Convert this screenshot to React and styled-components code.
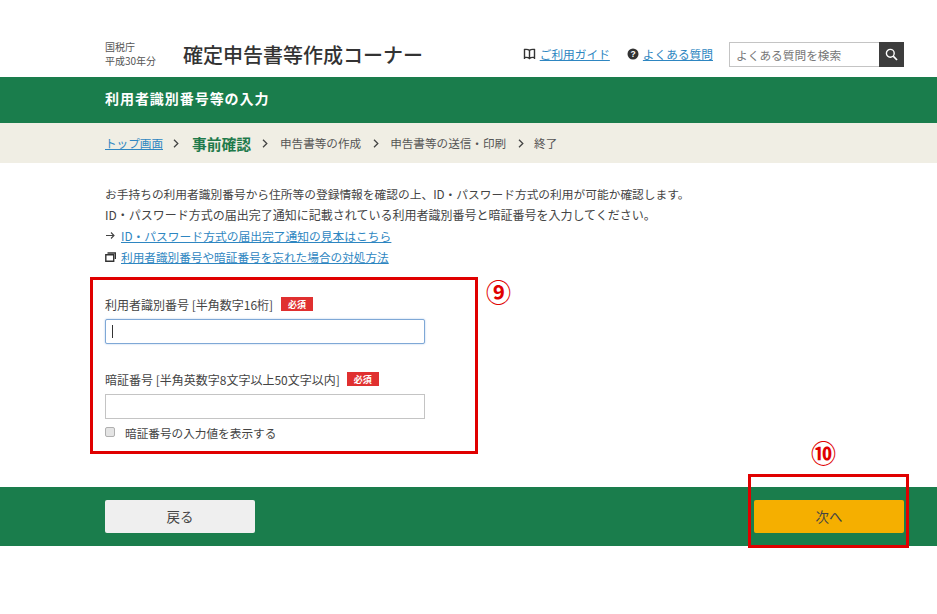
import React from 'react';
import styled, { createGlobalStyle } from 'styled-components';

const Global = createGlobalStyle`
  html, body { margin: 0; padding: 0; background: #fff; }
  body { font-family: "Noto Sans CJK JP", "Liberation Sans", sans-serif; color: #444; font-size: 12px; }
  * { box-sizing: border-box; }
`;
const Page = styled.div`width: 937px; height: 614px; position: relative; overflow: hidden; background: #fff;`;
const Header = styled.header`height: 77px; padding: 40px 33px 0 105px; display: flex; align-items: flex-start;`;
const Agency = styled.div`width: 78px; font-size: 10px; line-height: 13.5px; color: #555;`;
const SiteTitle = styled.h1`margin: 0; font-size: 20px; line-height: 30px; font-weight: 500; color: #333; white-space: nowrap;`;
const HeaderTools = styled.div`margin-left: auto; display: flex; align-items: center; height: 28px;`;
const ToolLink = styled.div`display: flex; align-items: center; gap: 4px; margin-right: ${p => p.$gap}px;`;
const Link = styled.a`color: #2e86c1; text-decoration: underline; font-size: ${p => p.$size || 12}px; line-height: 16px; white-space: nowrap;`;
const Search = styled.div`display: flex; width: 175px; height: 25px;`;
const SearchInput = styled.div`flex: 1; border: 1px solid #c4c4c4; border-right: 0; padding-left: 6px; font-size: 11.7px; line-height: 23px; color: #777; white-space: nowrap;`;
const SearchButton = styled.div`width: 25px; background: #3d3d3d; display: flex; align-items: center; justify-content: center;`;
const TitleBar = styled.div`height: 46px; background: #1a7d4c; color: #fff; padding-left: 105px; display: flex; align-items: center;`;
const PageTitle = styled.h2`margin: 0; font-size: 14px; font-weight: 700; letter-spacing: 0.95px; margin-top: -4px;`;
const Steps = styled.nav`height: 40px; background: #f0eee4; padding-left: 105px; display: flex; align-items: center; color: #555; white-space: nowrap;`;
const Step = styled.span`font-size: 11.6px;`;
const CurrentStep = styled.strong`font-size: 14.75px; color: #1f7a4b; font-weight: 700;`;
const Chevron = styled.svg`width: 6px; height: 9px; margin: 0 ${p => p.$r}px 0 ${p => p.$l}px; flex: none;`;
const Main = styled.main`height: 324px; padding: 21px 0 0 105px;`;
const Line = styled.p`margin: 0; font-size: ${p => p.$size || 12}px; line-height: 20.75px; height: 20.75px; color: #444; white-space: nowrap;`;
const IconLine = styled(Line)`display: flex; align-items: center; gap: 5px;`;
const FormBox = styled.section`position: relative; margin: 10px 0 0 -15px; width: 388px; height: 177px; border: 3px solid #e00000; padding: 16px 0 0 12px;`;
const FieldLabel = styled.div`display: flex; align-items: center; height: 16px; font-size: 12px; color: #444; white-space: nowrap;`;
const Required = styled.span`display: inline-flex; align-items: center; justify-content: center; width: 32px; height: 14px; background: #e03030; color: #fff; font-size: 9px; margin-left: ${p => p.$ml || 8}px; font-weight: 700;`;
const Field = styled.div`height: 25px; width: 320px; margin-top: ${p => p.$mt}px; margin-bottom: ${p => p.$mb || 0}px; background: #fff; border: 1px solid ${p => (p.$focus ? '#7fa8d6' : '#c4c4c4')}; border-radius: ${p => (p.$focus ? 2 : 0)}px; box-shadow: ${p => (p.$focus ? '0 0 2px #a8c6e8' : 'none')}; padding-left: 6px; display: flex; align-items: center;`;
const Caret = styled.span`width: 1px; height: 13px; background: #333;`;
const CheckRow = styled.label`display: flex; align-items: center; margin-top: 5px; height: 16px; font-size: 11.65px; color: #444;`;
const Check = styled.span`width: 10px; height: 10px; background: #e4e4e4; border: 1px solid #b0b0b0; border-radius: 2px; margin-right: 10px;`;
const Annotation = styled.span`position: absolute; color: #e00000; font-size: 25px; line-height: 1; font-weight: 700;`;
const FormMark = styled(Annotation)`left: 393px; top: -1px;`;
const Footer = styled.footer`height: 59px; background: #1a7d4c; padding: 0 33px 0 105px; display: flex; align-items: center; justify-content: space-between;`;
const Button = styled.button`width: 150px; height: 33px; border: 0; border-radius: 2px; font-family: inherit; font-size: 13.5px; line-height: 31px; color: #444; background: ${p => p.$primary ? '#f5af00' : '#efefef'}; padding: 0; margin-top: -1px;`;
const NextHighlight = styled.div`position: absolute; left: 748px; top: 474px; width: 161px; height: 74px; border: 3px solid #e00000;`;
const NextMark = styled(Annotation)`left: 811px; top: 440px;`;

const Chev = (p) => (
  <Chevron {...p} viewBox="0 0 6 9"><path d="M1 .8 4.8 4.5 1 8.2" fill="none" stroke="#444" strokeWidth="1.3" /></Chevron>
);

export default function App() {
  return (
    <Page>
      <Global />
      <Header>
        <Agency>国税庁<br />平成30年分</Agency>
        <SiteTitle>確定申告書等作成コーナー</SiteTitle>
        <HeaderTools>
          <ToolLink $gap={17}>
            <svg width="13" height="12" viewBox="0 0 13 12"><path d="M6.5 2.5C5.5 1.5 3.5 1.2 1.5 1.5V9.5C3.5 9.2 5.5 9.5 6.5 10.5 7.5 9.5 9.5 9.2 11.5 9.5V1.5C9.5 1.2 7.5 1.5 6.5 2.5ZM6.5 2.5V10.5M1.5 3V11M11.5 3V11" fill="none" stroke="#333" strokeWidth="1.4" /></svg>
            <Link href="#" $size={11.7}>ご利用ガイド</Link>
          </ToolLink>
          <ToolLink $gap={16}>
            <svg width="12" height="12" viewBox="0 0 12 12"><circle cx="6" cy="6" r="5.5" fill="#333" /><text x="6" y="9" textAnchor="middle" fontSize="8.5" fontWeight="700" fill="#fff" fontFamily="Liberation Sans">?</text></svg>
            <Link href="#" $size={11.7}>よくある質問</Link>
          </ToolLink>
          <Search>
            <SearchInput>よくある質問を検索</SearchInput>
            <SearchButton>
              <svg width="13" height="13" viewBox="0 0 13 13"><circle cx="5.3" cy="5.3" r="3.9" fill="none" stroke="#fff" strokeWidth="1.4" /><path d="M8.2 8.2 12 12" stroke="#fff" strokeWidth="1.7" /></svg>
            </SearchButton>
          </Search>
        </HeaderTools>
      </Header>
      <TitleBar><PageTitle>利用者識別番号等の入力</PageTitle></TitleBar>
      <Steps>
        <Link href="#" $size={11.6}>トップ画面</Link>
        <Chev $l={10} $r={13} />
        <CurrentStep>事前確認</CurrentStep>
        <Chev $l={11} $r={12} />
        <Step>申告書等の作成</Step>
        <Chev $l={12} $r={11} />
        <Step>申告書等の送信・印刷</Step>
        <Chev $l={12} $r={10} />
        <Step>終了</Step>
      </Steps>
      <Main>
        <Line $size={11.73}>お手持ちの利用者識別番号から住所等の登録情報を確認の上、ID・パスワード方式の利用が可能か確認します。</Line>
        <Line>ID・パスワード方式の届出完了通知に記載されている利用者識別番号と暗証番号を入力してください。</Line>
        <IconLine>
          <svg width="11" height="9" viewBox="0 0 11 9"><path d="M1 4.5H9M6 1.5 9 4.5 6 7.5" fill="none" stroke="#444" strokeWidth="1.1" /></svg>
          <Link href="#" $size={11.78}>ID・パスワード方式の届出完了通知の見本はこちら</Link>
        </IconLine>
        <IconLine>
          <svg width="11" height="10" viewBox="0 0 11 10"><path d="M2.5 1H10.5V7M.8 2.8H8.7V9.2H.8Z" fill="none" stroke="#333" strokeWidth="1.4" /></svg>
          <Link href="#" $size={11.65}>利用者識別番号や暗証番号を忘れた場合の対処方法</Link>
        </IconLine>
        <FormBox>
          <FormMark>⑨</FormMark>
          <FieldLabel>利用者識別番号 [半角数字16桁]<Required>必須</Required></FieldLabel>
          <Field $mt={7} $mb={27} $focus><Caret /></Field>
          <FieldLabel>暗証番号 [半角英数字8文字以上50文字以内]<Required $ml={7}>必須</Required></FieldLabel>
          <Field $mt={7} />
          <CheckRow><Check />暗証番号の入力値を表示する</CheckRow>
        </FormBox>
      </Main>
      <Footer>
        <Button>戻る</Button>
        <Button $primary>次へ</Button>
      </Footer>
      <NextMark>⑩</NextMark>
      <NextHighlight />
    </Page>
  );
}
